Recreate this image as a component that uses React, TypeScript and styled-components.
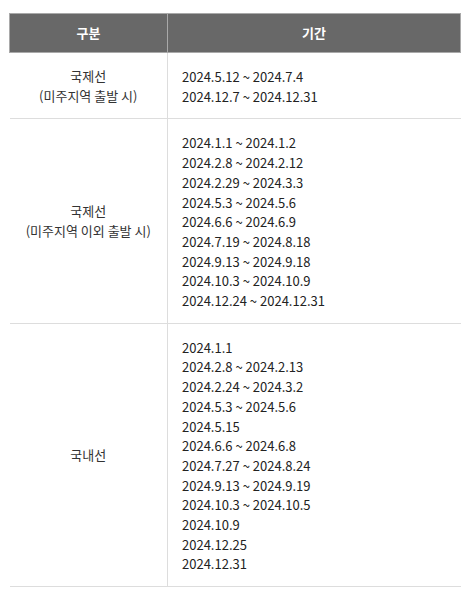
import React from 'react'
import styled, { createGlobalStyle } from 'styled-components'

type Row = {
  type: string
  note?: string
  periods: string[]
}

const rows: Row[] = [
  {
    type: '국제선',
    note: '(미주지역 출발 시)',
    periods: ['2024.5.12 ~ 2024.7.4', '2024.12.7 ~ 2024.12.31'],
  },
  {
    type: '국제선',
    note: '(미주지역 이외 출발 시)',
    periods: [
      '2024.1.1 ~ 2024.1.2',
      '2024.2.8 ~ 2024.2.12',
      '2024.2.29 ~ 2024.3.3',
      '2024.5.3 ~ 2024.5.6',
      '2024.6.6 ~ 2024.6.9',
      '2024.7.19 ~ 2024.8.18',
      '2024.9.13 ~ 2024.9.18',
      '2024.10.3 ~ 2024.10.9',
      '2024.12.24 ~ 2024.12.31',
    ],
  },
  {
    type: '국내선',
    periods: [
      '2024.1.1',
      '2024.2.8 ~ 2024.2.13',
      '2024.2.24 ~ 2024.3.2',
      '2024.5.3 ~ 2024.5.6',
      '2024.5.15',
      '2024.6.6 ~ 2024.6.8',
      '2024.7.27 ~ 2024.8.24',
      '2024.9.13 ~ 2024.9.19',
      '2024.10.3 ~ 2024.10.5',
      '2024.10.9',
      '2024.12.25',
      '2024.12.31',
    ],
  },
]

export default function App() {
  return (
    <>
      <GlobalStyle />
      <Wrap>
        <Table>
          <colgroup>
            <col style={{ width: 158 }} />
            <col />
          </colgroup>
          <thead>
            <tr>
              <Th>구분</Th>
              <Th>기간</Th>
            </tr>
          </thead>
          <tbody>
            {rows.map((row, i) => (
              <tr key={i}>
                <TypeCell>
                  {row.type}
                  {row.note && (
                    <>
                      <br />
                      {row.note}
                    </>
                  )}
                </TypeCell>
                <PeriodCell>
                  {row.periods.map(p => (
                    <Period key={p}>{p}</Period>
                  ))}
                </PeriodCell>
              </tr>
            ))}
          </tbody>
        </Table>
      </Wrap>
    </>
  )
}

const GlobalStyle = createGlobalStyle`
  html, body {
    margin: 0;
    background: #fff;
  }
  body {
    font-family: 'Noto Sans CJK KR', 'Noto Sans', sans-serif;
    color: #333;
  }
`

const Wrap = styled.div`
  padding: 13px 9px;
`

const Table = styled.table`
  width: 452px;
  border-collapse: collapse;
  table-layout: fixed;
  font-size: 13px;
  line-height: 19.7px;
`

const Th = styled.th`
  height: 38px;
  padding: 0;
  background: #686868;
  color: #fff;
  font-weight: 700;
  font-size: 13px;
  text-align: center;
  border: 1px solid #a9a9a9;
`

const TypeCell = styled.td`
  padding: 0 10px;
  text-align: center;
  vertical-align: middle;
  color: #333;
  border-bottom: 1px solid #ddd;
  border-right: 1px solid #ddd;
`

const PeriodCell = styled.td`
  padding: 14px 14px 12px;
  vertical-align: top;
  color: #222;
  border-bottom: 1px solid #ddd;
`

const Period = styled.div`
  white-space: nowrap;
`
